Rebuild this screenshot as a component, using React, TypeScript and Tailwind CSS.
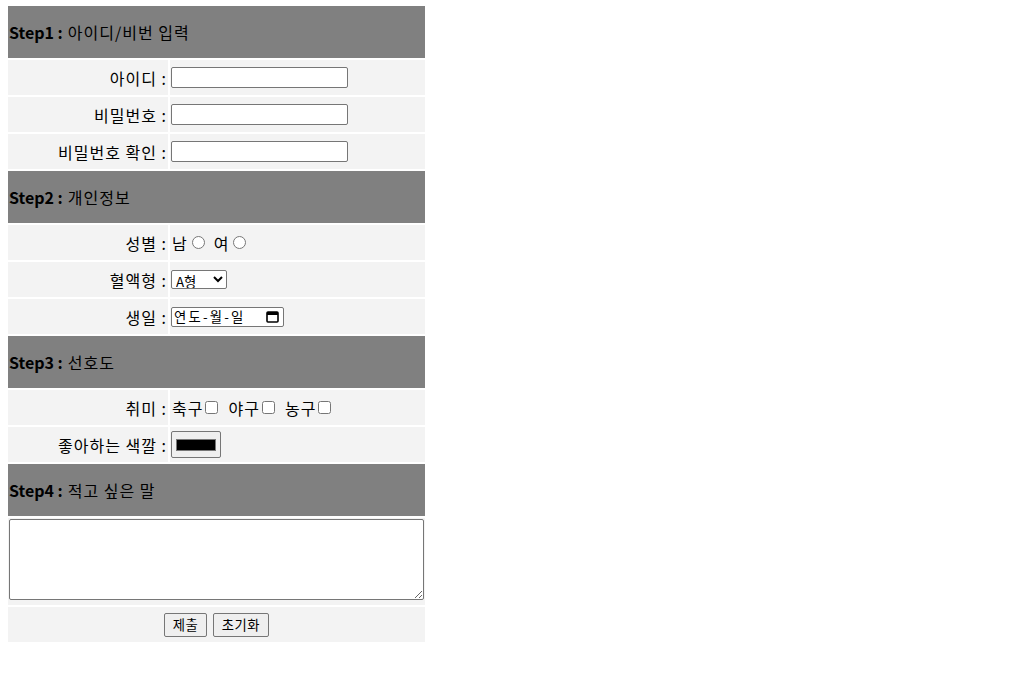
const font = "font-['Noto_Sans_CJK_KR',sans-serif]";

const Header = ({ step, title }: { step: string; title: string }) => (
  <div className="flex h-[52px] items-center bg-[#808080] px-[1px] text-[16px] leading-[20px] text-black">
    <b className="font-bold">{step} :</b>
    <span className="ml-[5px] tracking-[1px]">{title}</span>
  </div>
);

const Row = ({ label, children, h = "h-[35px]" }: { label: string; children: React.ReactNode; h?: string }) => (
  <div className={`grid grid-cols-[160px_255px] gap-x-[2px] ${h}`}>
    <div className="flex items-center justify-end bg-[#f3f3f3] pr-[1px] text-[16px] leading-[20px] tracking-[1px]">{label}</div>
    <div className="flex items-center bg-[#f3f3f3] pl-[1px] text-[16px] leading-[20px] tracking-[1px]">{children}</div>
  </div>
);

const TextInput = ({ type = "text" }: { type?: string }) => (
  <input
    type={type}
    className="h-[21px] w-[177px] rounded-[2px] border border-[#767676] bg-white px-[2px] text-[13.33px] outline-none"
  />
);

const Calendar = () => (
  <svg width="13" height="12" viewBox="0 0 13 12">
    <rect x="1" y="1" width="11" height="10" rx="1" fill="none" stroke="#000" strokeWidth="1.6" />
    <rect x="1" y="1" width="11" height="3" fill="#000" />
  </svg>
);

export default function App() {
  return (
    <div className={`${font} bg-white pl-[8px] pt-[6px] text-black`}>
      <form className="flex w-[417px] flex-col gap-y-[2px]">
        <Header step="Step1" title="아이디/비번 입력" />
        <Row label="아이디 :">
          <TextInput />
        </Row>
        <Row label="비밀번호 :">
          <TextInput type="password" />
        </Row>
        <Row label="비밀번호 확인 :">
          <TextInput type="password" />
        </Row>

        <Header step="Step2" title="개인정보" />
        <Row label="성별 :">
          <span className="ml-[1px]">남</span>
          <input type="radio" name="gender" className="ml-[4px] mr-[3px] h-[13px] w-[13px]" />
          <span className="ml-[6px]">여</span>
          <input type="radio" name="gender" className="ml-[4px] mr-[3px] h-[13px] w-[13px]" />
        </Row>
        <Row label="혈액형 :">
          <select className="h-[19px] w-[56px] rounded-[2px] border border-[#767676] bg-white text-[13.33px] leading-[15px] tracking-normal outline-none">
            <option>A형</option>
            <option>B형</option>
            <option>O형</option>
            <option>AB형</option>
          </select>
        </Row>
        <Row label="생일 :">
          <div className="flex h-[20px] w-[113px] items-center justify-between rounded-[2px] border border-[#767676] bg-white pl-[2px] pr-[4px] text-[13.33px] leading-[15px]">
            <span className="tracking-[2.2px]">연도-월-일</span>
            <Calendar />
          </div>
        </Row>

        <Header step="Step3" title="선호도" />
        <Row label="취미 :">
          <span className="ml-[1px]">축구</span>
          <input type="checkbox" className="ml-[2px] mr-[3px] h-[13px] w-[13px]" />
          <span className="ml-[7px]">야구</span>
          <input type="checkbox" className="ml-[2px] mr-[3px] h-[13px] w-[13px]" />
          <span className="ml-[7px]">농구</span>
          <input type="checkbox" className="ml-[2px] mr-[3px] h-[13px] w-[13px]" />
        </Row>
        <Row label="좋아하는 색깔 :">
          <div className="flex h-[27px] w-[50px] items-center justify-center rounded-[2px] border border-[#767676] bg-[#efefef]">
            <div className="h-[12px] w-[40px] border border-[#777] bg-black" />
          </div>
        </Row>

        <Header step="Step4" title="적고 싶은 말" />
        <div className="h-[87px] bg-[#f3f3f3] px-[1px] pt-[1px]">
          <textarea className="block h-[81px] w-full resize rounded-[2px] border border-[#767676] bg-white p-[2px] text-[13.33px] outline-none" />
        </div>
        <div className="flex h-[35px] items-center justify-center gap-x-[6px] bg-[#f3f3f3] text-[13.33px] leading-[16px] tracking-[0.5px]">
          <button type="submit" className="h-[24px] w-[43px] rounded-[2px] border border-[#767676] bg-[#efefef]">
            제출
          </button>
          <button type="reset" className="h-[24px] w-[56px] rounded-[2px] border border-[#767676] bg-[#efefef]">
            초기화
          </button>
        </div>
      </form>
    </div>
  );
}
